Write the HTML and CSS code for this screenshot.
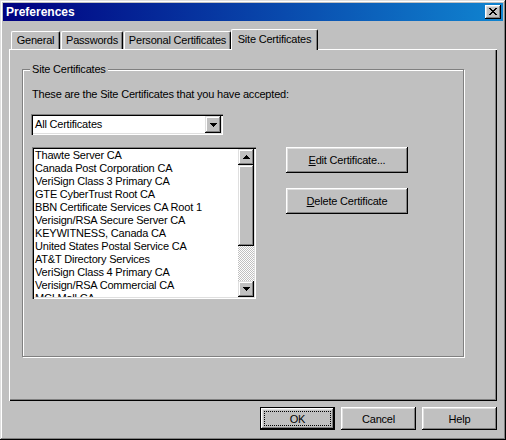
FILE: index.html
```html
<!DOCTYPE html>
<html>
<head>
<meta charset="utf-8">
<title>Preferences</title>
<link rel="stylesheet" href="styles.css">
</head>
<body>
<div class="window">
  <div class="titlebar">
    <span class="title">Preferences</span>
    <span class="close">
      <svg width="8" height="7" viewBox="0 0 8 7" shape-rendering="crispEdges"><path d="M0 0h2v1H0zM6 0h2v1H6zM1 1h2v1H1zM5 1h2v1H5zM2 2h4v1H2zM3 3h2v1H3zM2 4h4v1H2zM1 5h2v1H1zM5 5h2v1H5zM0 6h2v1H0zM6 6h2v1H6z" fill="#000"/></svg>
    </span>
  </div>
  <div class="client">
    <div class="tabs">
      <div class="tab tab-general">General</div>
      <div class="tab tab-passwords">Passwords</div>
      <div class="tab tab-personal">Personal Certificates</div>
      <div class="tab tab-site selected">Site Certificates</div>
    </div>
    <div class="panel">
      <div class="group">
        <span class="group-label">Site Certificates</span>
        <div class="intro">These are the Site Certificates that you have accepted:</div>
        <div class="combo">
          <span class="combo-text">All Certificates</span>
          <span class="arrow-btn combo-btn">
            <svg width="7" height="4" viewBox="0 0 7 4" shape-rendering="crispEdges"><path d="M0 0h7v1H0zM1 1h5v1H1zM2 2h3v1H2zM3 3h1v1H3z" fill="#000"/></svg>
          </span>
        </div>
        <div class="list-row">
          <div class="listbox">
            <ul class="items">
              <li>Thawte Server CA</li>
              <li>Canada Post Corporation CA</li>
              <li>VeriSign Class 3 Primary CA</li>
              <li>GTE CyberTrust Root CA</li>
              <li>BBN Certificate Services CA Root 1</li>
              <li>Verisign/RSA Secure Server CA</li>
              <li>KEYWITNESS, Canada CA</li>
              <li>United States Postal Service CA</li>
              <li>AT&amp;T Directory Services</li>
              <li>VeriSign Class 4 Primary CA</li>
              <li>Verisign/RSA Commercial CA</li>
              <li>MCI Mall CA</li>
            </ul>
            <div class="scrollbar">
              <span class="arrow-btn sb-btn">
                <svg width="7" height="4" viewBox="0 0 7 4" shape-rendering="crispEdges"><path d="M3 0h1v1H3zM2 1h3v1H2zM1 2h5v1H1zM0 3h7v1H0z" fill="#000"/></svg>
              </span>
              <span class="thumb"></span>
              <span class="track"></span>
              <span class="arrow-btn sb-btn">
                <svg width="7" height="4" viewBox="0 0 7 4" shape-rendering="crispEdges"><path d="M0 0h7v1H0zM1 1h5v1H1zM2 2h3v1H2zM3 3h1v1H3z" fill="#000"/></svg>
              </span>
            </div>
          </div>
          <div class="side-buttons">
            <button class="btn side-btn"><u>E</u>dit Certificate...</button>
            <button class="btn side-btn"><u>D</u>elete Certificate</button>
          </div>
        </div>
      </div>
    </div>
    <div class="footer">
      <button class="btn foot-btn default"><span class="focus">OK</span></button>
      <button class="btn foot-btn">Cancel</button>
      <button class="btn foot-btn">Help</button>
    </div>
  </div>
</div>
</body>
</html>
```

FILE: styles.css
```css
* { box-sizing: border-box; }

body {
  margin: 0;
  font-family: "Liberation Sans", Arial, sans-serif;
  font-size: 11px;
  letter-spacing: -0.2px;
  color: #000;
  background: #c0c0c0;
}

.window {
  width: 506px;
  height: 440px;
  background: #c0c0c0;
  padding: 3px;
  box-shadow: inset -1px -1px #000, inset 1px 1px #dfdfdf, inset -2px -2px #808080, inset 2px 2px #fff;
  display: flex;
  flex-direction: column;
}

.titlebar {
  height: 18px;
  background: linear-gradient(90deg, #000080, #1084d0);
  display: flex;
  align-items: center;
  justify-content: space-between;
  padding: 0 2px 0 3px;
}

.title {
  color: #fff;
  font-weight: bold;
  font-size: 12px;
  letter-spacing: 0;
  line-height: 14px;
}

.close {
  width: 16px;
  height: 14px;
  background: #c0c0c0;
  box-shadow: inset -1px -1px #000, inset 1px 1px #fff, inset -2px -2px #808080, inset 2px 2px #dfdfdf;
  display: flex;
  align-items: center;
  justify-content: center;
  padding-bottom: 1px;
}

.close svg { display: block; }

.client {
  padding: 8px 6px 0 6px;
}

.tabs {
  display: flex;
  align-items: flex-end;
  height: 20px;
  padding-left: 2px;
}

.tab {
  height: 18px;
  border: 1px solid;
  border-color: #fff #000 transparent #fff;
  border-bottom: 0;
  border-radius: 2px 2px 0 0;
  box-shadow: inset -1px 0 #808080;
  line-height: 16px;
  text-align: center;
  margin-right: 1px;
  white-space: nowrap;
}

.tab-general { width: 49px; }
.tab-passwords { width: 62px; }
.tab-personal { width: 107px; }
.tab-site { width: 87px; }

.tab.selected {
  height: 21px;
  margin-bottom: -1px;
  margin-left: -1px;
  padding-top: 1px;
  background: #c0c0c0;
  position: relative;
  z-index: 1;
}

.panel {
  height: 352px;
  border-top: 1px solid #fff;
  border-left: 1px solid #fff;
  box-shadow: inset -1px -1px #000, inset -2px -2px #808080;
  padding: 19px 0 0 12px;
}

.group {
  width: 442px;
  height: 288px;
  border: 1px solid #808080;
  box-shadow: inset 1px 1px #fff, 1px 1px #fff;
  position: relative;
  padding: 18px 0 0 9px;
}

.group-label {
  position: absolute;
  top: -7px;
  left: 7px;
  padding: 0 2px;
  background: #c0c0c0;
  line-height: 13px;
}

.intro {
  line-height: 13px;
  white-space: nowrap;
}

.combo {
  width: 192px;
  height: 21px;
  margin: 13px 0 0 -1px;
  background: #fff;
  box-shadow: inset 1px 1px #808080, inset 2px 2px #000, inset -1px -1px #fff, inset -2px -2px #dfdfdf;
  padding: 2px;
  display: flex;
  align-items: center;
}

.combo-text {
  flex: 1;
  padding-left: 2px;
  line-height: 13px;
}

.arrow-btn {
  width: 16px;
  background: #c0c0c0;
  box-shadow: inset -1px -1px #000, inset 1px 1px #dfdfdf, inset -2px -2px #808080, inset 2px 2px #fff;
  display: flex;
  align-items: center;
  justify-content: center;
  flex: none;
}

.arrow-btn svg { display: block; }

.combo-btn { height: 17px; }

.list-row {
  display: flex;
  align-items: flex-start;
  margin-top: 12px;
}

.listbox {
  width: 224px;
  height: 152px;
  background: #fff;
  box-shadow: inset 1px 1px #808080, inset 2px 2px #000, inset -1px -1px #fff, inset -2px -2px #dfdfdf;
  padding: 2px;
  display: flex;
}

.items {
  flex: 1;
  list-style: none;
  margin: 0;
  padding: 0 0 0 1px;
  overflow: hidden;
  line-height: 13px;
  white-space: nowrap;
}

.scrollbar {
  width: 16px;
  display: flex;
  flex-direction: column;
}

.sb-btn { height: 16px; }

.thumb {
  height: 81px;
  background: #c0c0c0;
  box-shadow: inset -1px -1px #000, inset 1px 1px #dfdfdf, inset -2px -2px #808080, inset 2px 2px #fff;
}

.track {
  flex: 1;
  background-color: #c0c0c0;
  background-image: conic-gradient(#fff 25%, #c0c0c0 0 50%, #fff 0 75%, #c0c0c0 0);
  background-size: 2px 2px;
}

.side-buttons {
  display: flex;
  flex-direction: column;
  gap: 15px;
  margin-left: 30px;
}

.btn {
  font-family: "Liberation Sans", Arial, sans-serif;
  font-size: 11px;
  letter-spacing: -0.2px;
  color: #000;
  background: #c0c0c0;
  border: 0;
  padding: 0;
  margin: 0;
  box-shadow: inset -1px -1px #000, inset 1px 1px #fff, inset -2px -2px #808080, inset 2px 2px #dfdfdf;
  display: flex;
  align-items: center;
  justify-content: center;
}

.side-btn {
  width: 122px;
  height: 26px;
}

.footer {
  display: flex;
  justify-content: flex-end;
  gap: 6px;
  margin-top: 6px;
}

.foot-btn {
  width: 75px;
  height: 23px;
}

.default {
  border: 1px solid #000;
  padding: 3px;
}

.focus {
  width: 100%;
  height: 100%;
  border: 1px dotted #000;
  display: flex;
  align-items: center;
  justify-content: center;
}
```
